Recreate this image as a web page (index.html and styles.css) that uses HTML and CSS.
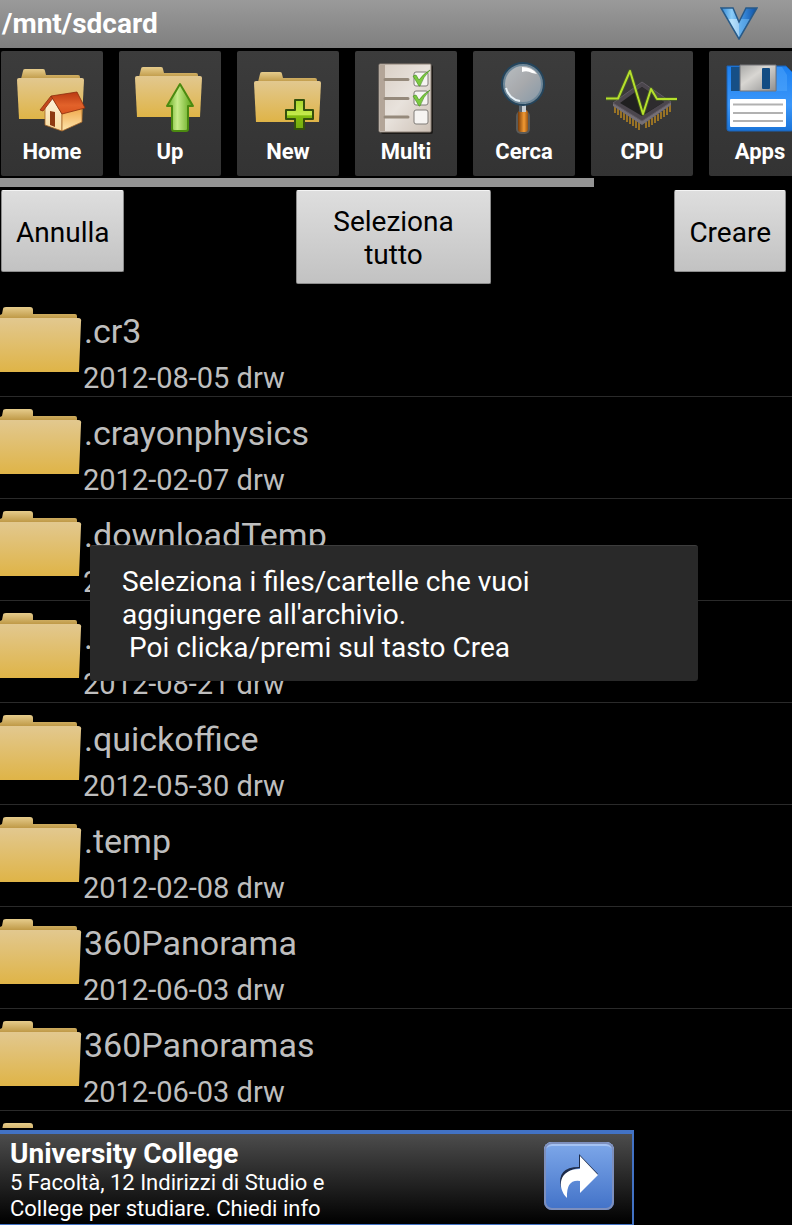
FILE: index.html
```
<!DOCTYPE html>
<html lang="it">
<head>
<meta charset="UTF-8">
<meta name="viewport" content="width=device-width, initial-scale=1.0">
<title>File Manager</title>
<link rel="stylesheet" href="styles.css">
</head>
<body>
<!-- shared shapes and gradients -->
<svg class="defs" aria-hidden="true">
    <defs>
        <linearGradient id="folderFront" x1="0" y1="0" x2="0" y2="1">
            <stop offset="0" stop-color="#e2c88f"/>
            <stop offset="1" stop-color="#dfb447"/>
        </linearGradient>
        <linearGradient id="folderBack" x1="0" y1="0" x2="0" y2="1">
            <stop offset="0" stop-color="#e6cc8c"/>
            <stop offset="1" stop-color="#b8903a"/>
        </linearGradient>
        <linearGradient id="roof" x1="0" y1="0" x2="0" y2="1">
            <stop offset="0" stop-color="#b93a12"/>
            <stop offset="0.6" stop-color="#e2622a"/>
            <stop offset="1" stop-color="#d9541f"/>
        </linearGradient>
        <linearGradient id="wall" x1="0" y1="0" x2="0" y2="1">
            <stop offset="0" stop-color="#fdf3dc"/>
            <stop offset="1" stop-color="#f8dca0"/>
        </linearGradient>
        <linearGradient id="sideWall" x1="0" y1="0" x2="0" y2="1">
            <stop offset="0" stop-color="#f0a648"/>
            <stop offset="1" stop-color="#fde6ad"/>
        </linearGradient>
        <linearGradient id="green" x1="0" y1="0" x2="1" y2="0">
            <stop offset="0" stop-color="#5ea61b"/>
            <stop offset="0.4" stop-color="#c8ec8a"/>
            <stop offset="1" stop-color="#58a012"/>
        </linearGradient>
        <linearGradient id="plus" x1="0" y1="0" x2="0" y2="1">
            <stop offset="0" stop-color="#a9d62c"/>
            <stop offset="0.5" stop-color="#c3ea4c"/>
            <stop offset="0.55" stop-color="#82bc10"/>
            <stop offset="1" stop-color="#74ab0e"/>
        </linearGradient>
        <linearGradient id="paper" x1="0" y1="0" x2="1" y2="1">
            <stop offset="0" stop-color="#d8cec4"/>
            <stop offset="0.5" stop-color="#e8e2dc"/>
            <stop offset="1" stop-color="#cdc1b6"/>
        </linearGradient>
        <linearGradient id="lens" x1="0" y1="0" x2="1" y2="1">
            <stop offset="0" stop-color="#b9bec2"/>
            <stop offset="0.5" stop-color="#a7a9ac"/>
            <stop offset="1" stop-color="#8699a8"/>
        </linearGradient>
        <linearGradient id="handle" x1="0" y1="0" x2="1" y2="0">
            <stop offset="0" stop-color="#7a3c08"/>
            <stop offset="0.6" stop-color="#f29a33"/>
            <stop offset="1" stop-color="#9a5412"/>
        </linearGradient>
        <linearGradient id="metal" x1="0" y1="0" x2="1" y2="1">
            <stop offset="0" stop-color="#a8a8a6"/>
            <stop offset="0.4" stop-color="#d8d6d2"/>
            <stop offset="1" stop-color="#8f8f8f"/>
        </linearGradient>
        <linearGradient id="disk" x1="0" y1="0" x2="0" y2="1">
            <stop offset="0" stop-color="#1c80f0"/>
            <stop offset="0.6" stop-color="#3b97fa"/>
            <stop offset="1" stop-color="#1a74d8"/>
        </linearGradient>
        <linearGradient id="vee" x1="0" y1="0" x2="1" y2="0">
            <stop offset="0" stop-color="#2f86d4"/>
            <stop offset="0.3" stop-color="#8ccdf8"/>
            <stop offset="0.6" stop-color="#3a8cdc"/>
            <stop offset="1" stop-color="#0d4fa3"/>
        </linearGradient>
        <symbol id="folderSmall" viewBox="0 0 67 50">
            <path fill="url(#folderBack)" d="M4 10L6 2Q6 0 8 0H26Q28 0 28 2L29 6H61Q63 6 63 8V12H3z"/>
            <path fill="url(#folderFront)" d="M0 11Q0 9 2 9H65Q67 9 67 11L65 50H2z"/>
        </symbol>
        <symbol id="folderLarge" viewBox="0 0 82 66">
            <path fill="url(#folderBack)" d="M0 8L2 7L3 2Q3 0 6 0H30Q33 0 33 3V7H75Q77 7 77 9V13H0z"/>
            <path fill="url(#folderFront)" d="M0 11H78Q82 11 81 15L79 65H0z"/>
        </symbol>
    </defs>
</svg>

<div class="screen">
    <header class="title-bar">
        <h1>/mnt/sdcard</h1>
        <button type="button" class="menu-button" aria-label="Menu">
            <svg viewBox="0 0 38 33" width="38" height="33" aria-hidden="true">
                <path d="M1 1H13L19 15L26 1H37L19 32z" fill="url(#vee)"/>
                <path d="M7 12H17L19 16L19 31z" fill="#e4f7ff" opacity="0.5"/>
                <path d="M19 16L21 12H30L19 31z" fill="#7cc4f6" opacity="0.5"/>
                <path d="M1 1H13L19 15L26 1H37L19 32z" fill="none" stroke="#285a88" stroke-width="1.500"/>
            </svg>
        </button>
    </header>

    <nav class="toolbar">
        <button type="button" class="tool">
            <svg viewBox="0 0 80 76" aria-hidden="true">
                <use href="#folderSmall" x="5" y="9" width="67" height="50"/>
                <path d="M33 45L40 37L50 54V71L33 65z" fill="url(#wall)" stroke="#a8672a" stroke-width="0.800"/>
                <path d="M50 53L70 47V62L50 71z" fill="url(#sideWall)" stroke="#a8672a" stroke-width="0.800"/>
                <path d="M38 51L43 52V67L38 65z" fill="#8d3a12"/>
                <path d="M28 50L39 36L41 38L31 51z" fill="#c4481c" stroke="#8a2c0c" stroke-width="0.800"/>
                <path d="M39 36L65 32L73 48L50 54z" fill="url(#roof)" stroke="#8a2c0c" stroke-width="0.800" stroke-linejoin="round"/>
            </svg>
            <span>Home</span>
        </button>
        <button type="button" class="tool">
            <svg viewBox="0 0 80 76" aria-hidden="true">
                <use href="#folderSmall" x="5" y="7" width="67" height="50"/>
                <path d="M50 24L63 46H58V69Q58 71 56 71H44Q42 71 42 69V46H37z" fill="url(#green)" stroke="#4b8a10" stroke-width="2" stroke-linejoin="round"/>
            </svg>
            <span>Up</span>
        </button>
        <button type="button" class="tool">
            <svg viewBox="0 0 80 76" aria-hidden="true">
                <use href="#folderSmall" x="6" y="12" width="67" height="50"/>
                <path d="M47 40H56V50H65V59H56V69H47V59H38V50H47z" fill="url(#plus)" stroke="#34500c" stroke-width="2" stroke-linejoin="round"/>
            </svg>
            <span>New</span>
        </button>
        <button type="button" class="tool">
            <svg viewBox="0 0 80 76" aria-hidden="true">
                <rect x="15" y="5" width="52" height="69" rx="2" fill="#1c1a18"/>
                <rect x="13" y="4" width="52" height="68" rx="1" fill="url(#paper)" stroke="#8f8378"/>
                <path d="M14 5H19V71H14z" fill="#b3a598"/>
                <path d="M19 19.500H42M19 38.500H42M19 57H42" stroke="#95897b" stroke-width="3" stroke-linecap="round"/>
                <g fill="#f6f4f2" stroke="#807c78">
                    <rect x="48" y="12" width="14" height="14" rx="2"/>
                    <rect x="48" y="31" width="14" height="14" rx="2"/>
                    <rect x="48" y="50" width="14" height="14" rx="2"/>
                </g>
                <g fill="#7cc940" stroke="#3f8a1b" stroke-width="0.600">
                    <path d="M47 16L50 15L53 20Q57 14 64 10Q57 17 54 26H53z"/>
                    <path d="M47 36L50 35L53 40Q57 34 64 30Q57 37 54 46H53z"/>
                </g>
            </svg>
            <span>Multi</span>
        </button>
        <button type="button" class="tool">
            <svg viewBox="0 0 80 76" aria-hidden="true">
                <rect x="32" y="51" width="14" height="23" rx="5" fill="#5a5a58"/>
                <rect x="34" y="50" width="10" height="22" rx="3" fill="url(#handle)"/>
                <path d="M35 42H42V52H35z" fill="#c5ccd2"/>
                <path d="M35 42H38V52H35z" fill="#58636d"/>
                <circle cx="39" cy="24" r="21" fill="none" stroke="#24455d" stroke-width="2"/>
                <circle cx="39" cy="24" r="19" fill="url(#lens)" stroke="#6d8799" stroke-width="2"/>
                <path d="M22 28A17 17 0 0 0 36 41" fill="none" stroke="#e8f2f8" stroke-width="2"/>
                <path d="M38 7Q48 7 53 14L48 13Q43 10 38 12z" fill="#fff"/>
            </svg>
            <span>Cerca</span>
        </button>
        <button type="button" class="tool">
            <svg viewBox="0 0 80 76" aria-hidden="true">
                <path d="M13 46V53M16 48V55M19 50V58M22 52V60M25 54V62M28 56V64M31 58V66M34 60V68M37 62V70M44 62V68M47 60V67M50 58V65M53 56V63M56 54V61M59 52V59M62 50V57M65 47V55M68 45V52" stroke="#b98720" stroke-width="1.500"/>
                <path d="M11 43L40 61L69 42V45L40 65L11 46z" fill="#746f76"/>
                <path d="M40 22L69 42L40 61L11 43z" fill="#4b464d" stroke="#615b63"/>
                <path d="M40 27L62 42L40 56L18 43z" fill="#202020"/>
                <path d="M40 27L62 42L44 53L32 32z" fill="#2e2c2e"/>
                <path d="M4 38.500H16L28 11L41 54L49 29L55 39H75" fill="none" stroke="#53731b" stroke-width="4" stroke-linejoin="round" opacity="0.500"/>
                <path d="M4 38.500H16L28 11L41 54L49 29L55 39H75" fill="none" stroke="#b5e02c" stroke-width="2" stroke-linejoin="round"/>
            </svg>
            <span>CPU</span>
        </button>
        <button type="button" class="tool">
            <svg viewBox="0 0 80 76" aria-hidden="true">
                <path d="M7 6H66L74 14V68Q74 71 71 71H9Q7 71 7 69z" fill="url(#disk)" stroke="#1c63b4"/>
                <path d="M29 31H67V15L62 7H57V31z" fill="#5db0ff" opacity="0.400"/>
                <path d="M11 7H20V31H11z" fill="#164f86"/>
                <path d="M20 5H56V31H20z" fill="url(#metal)" stroke="#77777a"/>
                <rect x="42" y="8" width="8" height="21" rx="1" fill="#124c83"/>
                <rect x="10" y="39" width="56" height="28" rx="1" fill="#fff"/>
                <path d="M13 44.500H63M13 53H63M13 61H63" stroke="#b1b1b1" stroke-width="2"/>
            </svg>
            <span>Apps</span>
        </button>
    </nav>
    <div class="scroll-track"><div class="scroll-thumb"></div></div>

    <div class="actions">
        <button type="button" class="action">Annulla</button>
        <button type="button" class="action wide">Seleziona tutto</button>
        <button type="button" class="action last">Creare</button>
    </div>

    <ul class="files">
        <li><svg class="folder"><use href="#folderLarge"/></svg><div><h2>.cr3</h2><p>2012-08-05 drw</p></div></li>
        <li><svg class="folder"><use href="#folderLarge"/></svg><div><h2>.crayonphysics</h2><p>2012-02-07 drw</p></div></li>
        <li><svg class="folder"><use href="#folderLarge"/></svg><div><h2>.downloadTemp</h2><p>2012-08-21 drw</p></div></li>
        <li><svg class="folder"><use href="#folderLarge"/></svg><div><h2>.</h2><p>2012-08-21 drw</p></div></li>
        <li><svg class="folder"><use href="#folderLarge"/></svg><div><h2>.quickoffice</h2><p>2012-05-30 drw</p></div></li>
        <li><svg class="folder"><use href="#folderLarge"/></svg><div><h2>.temp</h2><p>2012-02-08 drw</p></div></li>
        <li><svg class="folder"><use href="#folderLarge"/></svg><div><h2>360Panorama</h2><p>2012-06-03 drw</p></div></li>
        <li><svg class="folder"><use href="#folderLarge"/></svg><div><h2>360Panoramas</h2><p>2012-06-03 drw</p></div></li>
        <li><svg class="folder"><use href="#folderLarge"/></svg></li>
    </ul>

    <aside class="ad">
        <div class="ad-text">
            <h2>University College</h2>
            <p>5 Facoltà, 12 Indirizzi di Studio e<br>College per studiare. Chiedi info</p>
        </div>
        <a href="#" class="ad-link" aria-label="University College">
            <svg viewBox="0 0 70 68" width="70" height="68" aria-hidden="true">
                <path d="M35 12L54 32L50 36L36 26Q17 28 17 46Q12 25 35 25z" fill="#1d2b49"/>
                <path d="M36 14L54 33L36 51V39Q22 37 23 56C13 46 14 27 36 27z" fill="#fff"/>
            </svg>
        </a>
    </aside>
</div>

<div class="toast" role="status">Seleziona i files/cartelle che vuoi aggiungere all'archivio.
 Poi clicka/premi sul tasto Crea</div>
</body>
</html>
```
FILE: styles.css
```
* {
    box-sizing: border-box;
}

body {
    margin: 0;
    background-color: #000;
    color: #fff;
    font-family: Roboto, "Liberation Sans", sans-serif;
}

h1, h2, p, ul {
    margin: 0;
    padding: 0;
}

button {
    padding: 0;
    border: none;
    font-family: inherit;
    cursor: pointer;
}

.defs {
    position: absolute;
    width: 0;
    height: 0;
}

.screen {
    display: flex;
    flex-direction: column;
    height: 100vh;
    overflow: hidden;
}

/* title bar */
.title-bar {
    display: flex;
    align-items: center;
    justify-content: space-between;
    flex-shrink: 0;
    height: 48px;
    padding: 0 34px 2px 2px;
    background: linear-gradient(#9a9a9a, #7f7f7f);
}

.title-bar h1 {
    font-size: 28px;
    line-height: 33px;
}

.menu-button {
    display: flex;
    background: none;
}

/* toolbar */
.toolbar {
    display: flex;
    flex-shrink: 0;
    gap: 16px;
    padding: 3px 1px 2px;
    overflow: hidden;
}

.tool {
    display: flex;
    flex-direction: column;
    align-items: center;
    flex: 0 0 102px;
    height: 125px;
    padding-top: 9px;
    border-radius: 2px;
    background: linear-gradient(#3c3c3c, #333);
    color: #fff;
    font-size: 22px;
    font-weight: bold;
    line-height: 32px;
}

.tool svg {
    flex-shrink: 0;
    width: 80px;
    height: 76px;
}

.scroll-track {
    flex-shrink: 0;
    height: 9px;
}

.scroll-thumb {
    width: 75%;
    height: 100%;
    background-color: #949494;
}

/* action buttons */
.actions {
    display: grid;
    grid-template-columns: 1fr auto 1fr;
    align-items: start;
    flex-shrink: 0;
    padding: 3px 6px 11px 1px;
}

.action {
    justify-self: start;
    min-height: 82px;
    padding: 14px 14px 12px;
    border: 1px solid #8d8d8d;
    border-top-color: #f4f4f4;
    border-radius: 2px;
    background: linear-gradient(#dedede, #c2c2c2);
    color: #000;
    font-size: 28px;
    line-height: 33px;
}

.action.wide {
    width: 195px;
    min-height: 94px;
}

.action.last {
    justify-self: end;
}

/* file list */
.files {
    flex: 1;
    min-height: 0;
    overflow: hidden;
    list-style: none;
    color: #bebebe;
}

.files li {
    display: flex;
    gap: 1px;
    height: 102px;
    border-bottom: 1px solid #2a2a2a;
}

.folder {
    flex-shrink: 0;
    width: 82px;
    height: 66px;
    margin-top: 12px;
}

.files h2 {
    margin-top: 16px;
    padding-left: 1px;
    font-size: 34px;
    font-weight: normal;
    line-height: 40px;
}

.files p {
    margin-top: 11px;
    font-size: 29px;
    line-height: 33px;
}

/* advert */
.ad {
    display: flex;
    justify-content: space-between;
    flex-shrink: 0;
    width: 80%;
    height: 95px;
    margin-top: 2px;
    padding: 4px 18px 0 10px;
    border: solid #4272c4;
    border-width: 4px 2px 1px 0;
    background: linear-gradient(#4c4c4c, #000);
}

.ad h2 {
    font-size: 28px;
    line-height: 32px;
}

.ad p {
    font-size: 22px;
    line-height: 26px;
}

.ad-link {
    width: 70px;
    height: 68px;
    margin-top: 4px;
    border-radius: 8px;
    background: linear-gradient(#7ea8ea, #4272c8);
    box-shadow: inset 0 0 0 2px #7d8fbd, inset 0 4px 0 #a4c2f2;
}

/* message over the list */
.toast {
    position: fixed;
    bottom: 544px;
    left: 90px;
    right: 94px;
    padding: 19px 130px 17px 32px;
    border-top: 1px solid #3d3d3d;
    border-radius: 3px;
    background-color: #292929;
    font-size: 28px;
    line-height: 33px;
    white-space: pre-wrap;
}
```
